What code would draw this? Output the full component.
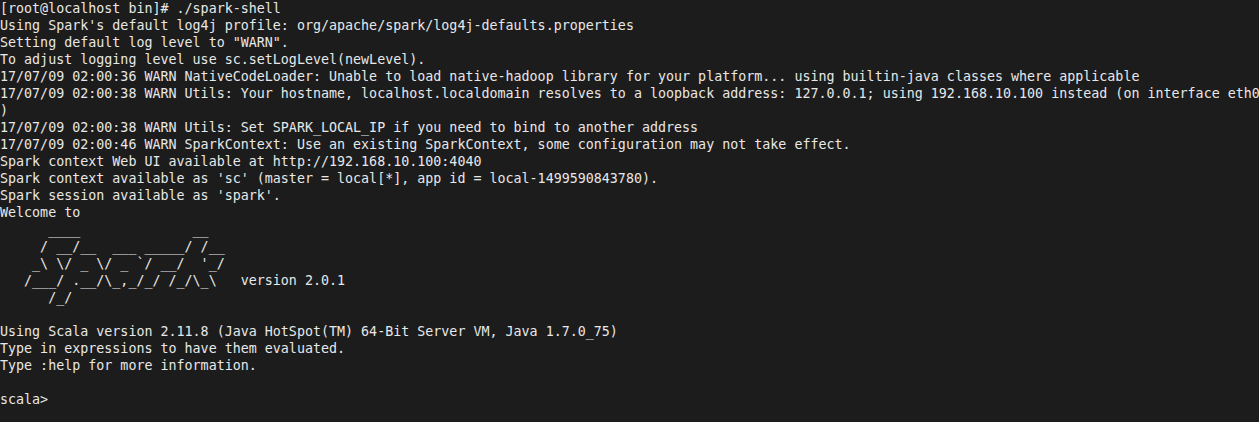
import React from 'react'

const lines = [
  '[root@localhost bin]# ./spark-shell',
  "Using Spark's default log4j profile: org/apache/spark/log4j-defaults.properties",
  'Setting default log level to "WARN".',
  'To adjust logging level use sc.setLogLevel(newLevel).',
  '17/07/09 02:00:36 WARN NativeCodeLoader: Unable to load native-hadoop library for your platform... using builtin-java classes where applicable',
  '17/07/09 02:00:38 WARN Utils: Your hostname, localhost.localdomain resolves to a loopback address: 127.0.0.1; using 192.168.10.100 instead (on interface eth0',
  ')',
  '17/07/09 02:00:38 WARN Utils: Set SPARK_LOCAL_IP if you need to bind to another address',
  '17/07/09 02:00:46 WARN SparkContext: Use an existing SparkContext, some configuration may not take effect.',
  'Spark context Web UI available at http://192.168.10.100:4040',
  "Spark context available as 'sc' (master = local[*], app id = local-1499590843780).",
  "Spark session available as 'spark'.",
  'Welcome to',
  '      ____              __',
  '     / __/__  ___ _____/ /__',
  "    _\\ \\/ _ \\/ _ `/ __/  '_/",
  '   /___/ .__/\\_,_/_/ /_/\\_\\   version 2.0.1',
  '      /_/',
  '',
  'Using Scala version 2.11.8 (Java HotSpot(TM) 64-Bit Server VM, Java 1.7.0_75)',
  'Type in expressions to have them evaluated.',
  'Type :help for more information.',
  '',
  'scala>',
]

export default function App() {
  return (
    <div className="w-[1259px] h-[422px] overflow-hidden bg-[#1c1c1c] text-[#e8e8e8] font-['DejaVu_Sans_Mono',monospace] text-[13.33px] leading-[17px]">
      {lines.map((l, i) => (
        <div key={i} className="h-[17px] whitespace-pre">{l}</div>
      ))}
    </div>
  )
}
